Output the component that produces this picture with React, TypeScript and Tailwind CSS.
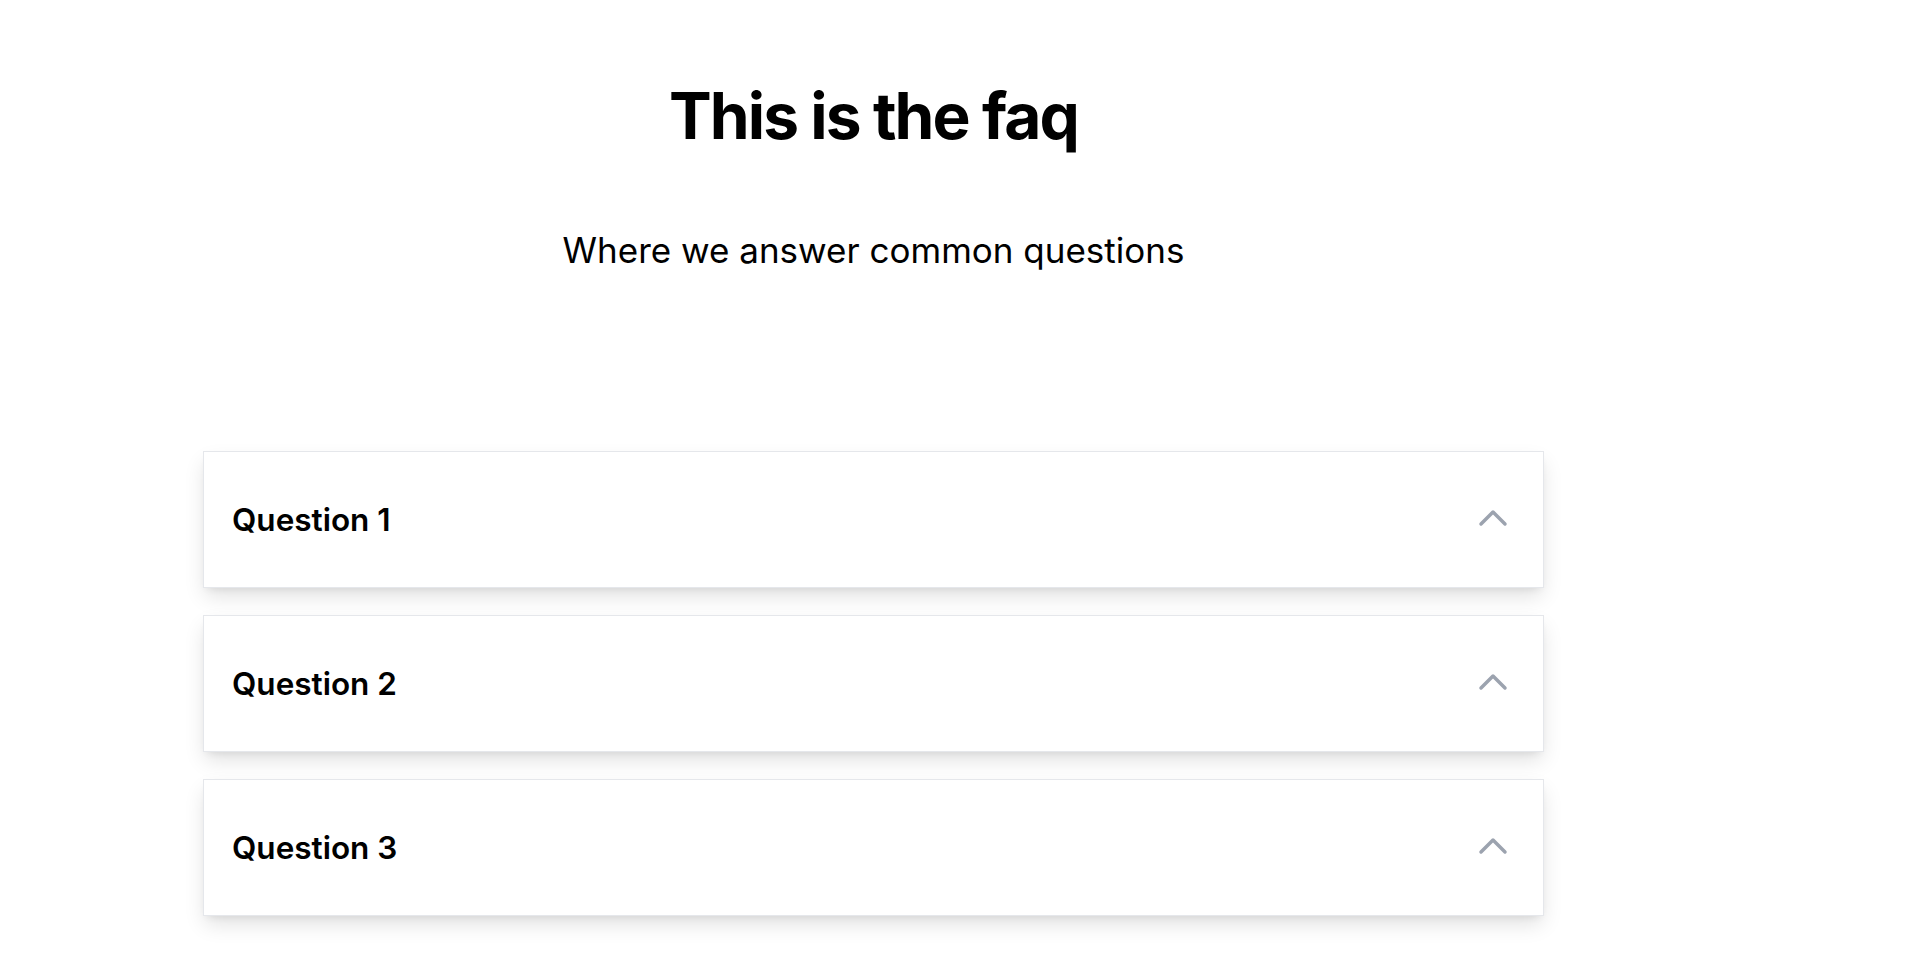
import React, { useState } from 'react';

const questions = [
    { id: 1, title: 'Question 1', answer: 'This is the answer to question 1.' },
    { id: 2, title: 'Question 2', answer: 'This is the answer to question 2.' },
    { id: 3, title: 'Question 3', answer: 'This is the answer to question 3.' },
];

const ChevronUp = () => (
    <svg width="30" height="18" viewBox="0 0 30 18" fill="none" stroke="#9ca3af" strokeWidth="3.5" strokeLinecap="round" strokeLinejoin="round" className="-mt-1">
        <path d="M3 15 15 3l12 12" />
    </svg>
);

export default function App() {
    const [open, setOpen] = useState<number | null>(null);

    return (
        <div className="min-h-screen bg-white text-black font-['Inter',sans-serif]">
            <div className="w-[1747px] pt-[84px] pb-10">
                {/* Header */}
                <h1 className="text-center text-[64px] leading-none font-bold tracking-[-0.03em]">This is the faq</h1>
                <p className="mt-[85px] text-center text-[35px] leading-none">Where we answer common questions</p>

                {/* Questions */}
                <div className="mt-[183px] px-[203px] flex flex-col gap-[27px]">
                    {questions.map(q => (
                        <div key={q.id} className="bg-white border border-[#e5e7eb] shadow-[0_10px_20px_-2px_rgba(0,0,0,0.12),0_4px_8px_-4px_rgba(0,0,0,0.1)]">
                            <button
                                onClick={() => setOpen(open === q.id ? null : q.id)}
                                className="w-full h-[135px] flex items-center justify-between pl-[28px] pr-[35px] text-left"
                            >
                                <span className="text-[31.5px] font-semibold">{q.title}</span>
                                <ChevronUp />
                            </button>
                            {open === q.id && (
                                <div className="px-[28px] pb-8 text-xl text-gray-600">{q.answer}</div>
                            )}
                        </div>
                    ))}
                </div>
            </div>
        </div>
    );
}
